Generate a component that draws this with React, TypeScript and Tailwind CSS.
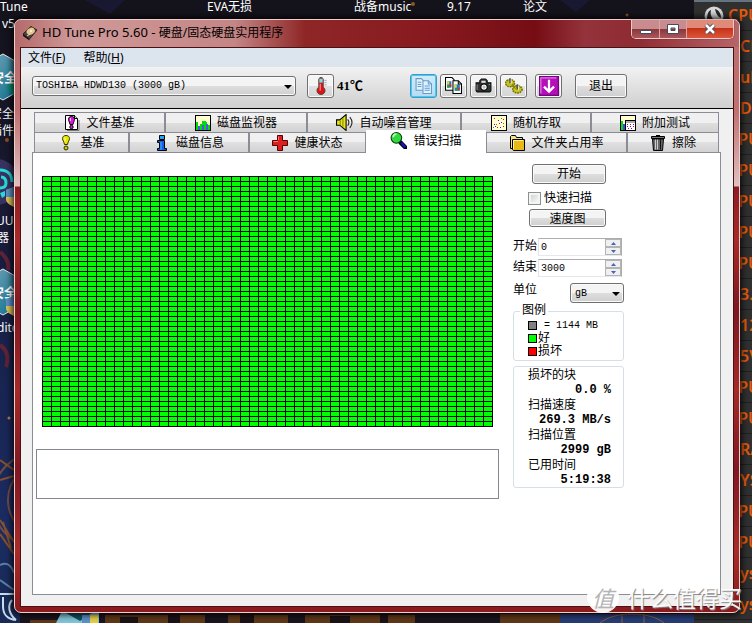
import type { ReactNode } from "react";
import clsx from "clsx";

const mono = "font-['Liberation_Mono','Noto_Sans_CJK_SC',monospace]";
const sans = "font-['Noto_Sans','Noto_Sans_CJK_SC',sans-serif]";

function Icon({ children, size = 16 }: { children: ReactNode; size?: number }) {
  return (
    <svg width={size} height={size} viewBox="0 0 16 16" className="shrink-0" aria-hidden="true">
      {children}
    </svg>
  );
}

/* ---------- Icons ---------- */

const FileBenchIcon = () => (
  <Icon>
    <path d="M1.500.5h9l3 3v11h-12z" fill="#fff" stroke="#000" />
    <path d="M10.500.5v3h3" fill="#ddd" stroke="#000" />
    <path d="M15 5v10.500H3" fill="none" stroke="#777" />
    <path d="M7.500 1.500c2 0 3 1 3 3 0 1.500-1 2.500-1.500 5H6c-.5-2.500-1.500-3.500-1.500-5 0-2 1-3 3-3z" fill="#d41ad4" stroke="#000" />
    <path d="M6.500 3v3" stroke="#ffb4ff" />
    <circle cx="7.500" cy="12" r="1.700" fill="#d41ad4" stroke="#000" />
  </Icon>
);

const MonitorIcon = () => (
  <Icon>
    <g shapeRendering="crispEdges">
      <rect x=".5" y=".5" width="15" height="15" fill="#ffffd2" stroke="#000" />
      <path d="M1 7h2v8H1zM5 9h2v6H5zM9 6h2v9H9zM13 10h2v5h-2z" fill="#00e000" />
      <path d="M3 11h2v4H3zM7 10h2v5H7zM11 9h2v6h-2z" fill="#5050f0" />
      <path d="M7 6h2v4H7zM11 7h1v2h-1z" fill="#00e000" />
    </g>
  </Icon>
);

const SpeakerIcon = () => (
  <Icon size={17}>
    <path d="M.5 5.500h3L9.500.5v15L3.500 10.500h-3z" fill="#e6e619" stroke="#000" />
    <path d="M4 6v4M6.500 4v8" stroke="#878700" />
    <path d="M11 5c1.500 2 1.500 4 0 6M13 3c2.500 3 2.500 7 0 10" fill="none" stroke="#222" />
  </Icon>
);

const RandomIcon = () => (
  <Icon>
    <g shapeRendering="crispEdges">
      <rect x=".5" y=".5" width="15" height="15" fill="#ffffd2" stroke="#000" />
      <path d="M3 3h1v1H3zM8 8h1v1H8zM12 11h1v1h-1zM6 12h1v1H6zM12 4h1v1h-1z" fill="#f00" />
      <path d="M3 9h1v1H3zM7 5h1v1H7zM10 7h1v1h-1zM9 12h1v1H9zM4 11h1v1H4z" fill="#22f" />
      <path d="M2 12h1v1H2zM5 9h1v1H5zM10 3h1v1h-1zM12 8h1v1h-1z" fill="#a60" />
    </g>
  </Icon>
);

const ExtraIcon = () => (
  <Icon>
    <g shapeRendering="crispEdges">
      <rect x=".5" y=".5" width="15" height="15" fill="#ffffd2" stroke="#000" />
      <path d="M1 6h2v9H1z" fill="#00e000" />
      <path d="M3 9h2v6H3z" fill="#44f" />
      <rect x="5.500" y="5.500" width="10" height="10" fill="#fff" stroke="#000" />
      <path d="M6 6h9v2H6z" fill="#aaa" />
      <path d="M7 9h1v1H7zM10 9h1v1h-1zM13 11h1v1h-1zM8 13h1v1H8z" fill="#f00" />
      <path d="M7 11h1v1H7zM10 11h1v1h-1zM13 9h1v1h-1zM11 13h1v1h-1z" fill="#22f" />
    </g>
  </Icon>
);

const BulbIcon = () => (
  <Icon>
    <path d="M8 .5c2.500 0 3.500 1.500 3.500 3 0 2-1.500 3-2 6h-3c-.5-3-2-4-2-6 0-1.500 1-3 3.500-3z" fill="#e6e600" stroke="#333300" />
    <path d="M7 2.500v4" stroke="#ffffc0" />
    <circle cx="8" cy="13" r="2" fill="#d0c800" stroke="#333300" />
  </Icon>
);

const InfoIcon = () => (
  <Icon>
    <path d="M5.500.5h5v4h-5z" fill="#19a5f0" stroke="#000" />
    <path d="M3.500 5.500h7v8h2v2h-9v-2h2v-6h-2z" fill="#1560e6" stroke="#000" />
    <path d="M7 7v8" stroke="#37b4ff" />
  </Icon>
);

const HealthIcon = () => (
  <Icon>
    <path d="M5.500.5h5v5h5v5h-5v5h-5v-5h-5v-5h5z" fill="#dc1e1e" stroke="#500" />
    <path d="M6.500 5V1.500M1.500 6.500H6" stroke="#ff7878" />
  </Icon>
);

const LensIcon = () => (
  <Icon size={17}>
    <path d="M10 10l4.500 4.500" stroke="#000" strokeWidth="4" strokeLinecap="round" />
    <path d="M10.500 10l4 4.500" stroke="#1414c8" strokeWidth="2.200" />
    <circle cx="6" cy="5.500" r="5" fill="#2ddc3c" stroke="#0a3c0a" />
    <path d="M3 5c0-2 1-3 3-3" fill="none" stroke="#c8ffc8" strokeWidth="1.500" />
  </Icon>
);

const FolderIcon = () => (
  <Icon>
    <path d="M1.500 13.500v-12l1-1h4l1 2h6v11z" fill="#f5e187" stroke="#000" />
    <path d="M3.500 4.500h12v11h-11l-1-1z" fill="#e6b919" stroke="#000" />
    <path d="M4.500 14V5.500H14" fill="none" stroke="#fff0a0" />
  </Icon>
);

const TrashIcon = () => (
  <Icon>
    <path d="M6 .5h4M1.500 1.500h13v2h-13z" fill="#777" stroke="#000" />
    <path d="M2.500 4h11l-1 11.500h-9z" fill="#666" stroke="#000" />
    <path d="M5.500 4.500v10M7.500 4.500v10" stroke="#ccc" />
    <path d="M10.500 4.500v10" stroke="#111" />
  </Icon>
);

const ThermoIcon = () => (
  <Icon size={18}>
    <path d="M6 9V2L7 .5h2L10 2v7a3.600 3.600 0 1 1-4 0z" fill="#dc1414" stroke="#444" strokeWidth=".8" />
    <path d="M6.500 1.500h3V5h-3z" fill="#73e1e6" />
    <path d="M7.300 6v6" stroke="#ff9696" />
    <path d="M11 3h2M11 5h2M11 7h2" stroke="#888" strokeWidth=".6" />
  </Icon>
);

const CopyIcon = () => (
  <Icon size={17}>
    <path d="M1 1.500h5l2 2v9H1z" fill="#e1f3ff" stroke="#6e9bb9" />
    <path d="M7.500 3.500h5l3 3v9h-8z" fill="#e1f3ff" stroke="#6e9bb9" />
    <path d="M12.500 3.500v3h3M2.500 5H6M2.500 7H6M2.500 9H6M9 8.500h5M9 10.500h5M9 12.500h5" fill="none" stroke="#5f9be1" />
  </Icon>
);

const CopyImageIcon = () => (
  <Icon size={17}>
    <path d="M.5.5h6l2 2v10h-8z" fill="#fff" stroke="#000" />
    <path d="M2 4h4v6H2z" fill="#2378c8" />
    <path d="M7.500 3.500h5l3 3v9h-8z" fill="#fff" stroke="#000" />
    <path d="M9 7h5v6H9z" fill="#2378c8" />
    <path d="M2 4h2v3H2zM9 7h2v3H9z" fill="#e6dc1e" />
    <path d="M4 7h2v2H4zM12 10h2v2h-2z" fill="#e62828" />
    <path d="M2 8h2v2H2zM10 11h2v2h-2z" fill="#19b419" />
    <path d="M12.500 3.500v3h3" fill="none" stroke="#000" />
  </Icon>
);

const CameraIcon = () => (
  <Icon size={17}>
    <path d="M1 5.500h3.500V3.500L6 2h4l1.500 1.500v2H15V13l-1 1H2l-1-1z" fill="#333" stroke="#111" />
    <path d="M6 3.500h4v2H6z" fill="#ddd" />
    <path d="M2 7v5" stroke="#888" />
    <circle cx="8.500" cy="9.500" r="3" fill="#fff" stroke="#000" />
    <circle cx="8.500" cy="9.500" r="1.500" fill="#bbb" />
    <path d="M13 7h1" stroke="#3e3" />
  </Icon>
);

const GearsIcon = () => (
  <Icon size={18}>
    <g fill="#c8c31e" stroke="#6e6e00" strokeWidth="1.300" strokeDasharray="1.500 .7">
      <ellipse cx="4.500" cy="5.500" rx="4" ry="3.200" />
      <ellipse cx="11" cy="11" rx="4.200" ry="3.200" />
      <path d="M6 7l4 3" stroke="#8c8c00" strokeWidth="3" />
    </g>
    <path d="M4.500 1v4.500M11 6.500v4.500" stroke="#555" strokeWidth="1.500" />
    <path d="M5.500 2v4M12 7.500v4" stroke="#eee" strokeWidth=".8" />
  </Icon>
);

const SaveIcon = () => (
  <Icon size={20}>
    <path d="M.5.5h15v15H.5z" fill="#b40fb9" stroke="#6e0a78" />
    <path d="M1.500 14V1.500H14" fill="none" stroke="#e678e6" />
    <path d="M8 3v9M4 8.500l4 4 4-4" fill="none" stroke="#fff" strokeWidth="1.800" />
  </Icon>
);

const DiskIcon = () => (
  <Icon>
    <path d="M1 9l8-7.500 6 3.500-7.500 9z" fill="#4a4440" stroke="#29211d" />
    <path d="M1 9l6.500 5v1.500L1 11z" fill="#191410" />
    <ellipse cx="8.700" cy="6.300" rx="4.300" ry="3.300" fill="#e6c48c" transform="rotate(-28 8.700 6.300)" />
    <circle cx="9" cy="6" r="1.100" fill="#fff5dc" />
    <path d="M5 11l3-2" stroke="#ddd" />
  </Icon>
);

const Caret = () => (
  <svg width="8" height="4" viewBox="0 0 8 4" className="pointer-events-none absolute top-1/2 right-1 -mt-px" aria-hidden="true">
    <path d="M0 0h8L4 4z" fill="#000" />
  </svg>
);

/* ---------- Desktop behind the window ---------- */

const desktopLabels = [
  { text: "Tune", className: "left-0" },
  { text: "EVA无损", className: "left-[207px]" },
  { text: "战备music", className: "left-[354px]" },
  { text: "9.17", className: "left-[447px]" },
  { text: "论文", className: "left-[523px]" },
];

const sideLabels = [
  { text: "v5", className: "top-[15px] left-0.5" },
  { text: "安全", className: "top-[105px] -left-2.5" },
  { text: "插件", className: "top-[122px] -left-2.5" },
  { text: "UU", className: "top-[212px] -left-1" },
  { text: "器", className: "top-[229px] -left-[3px]" },
  { text: "dito", className: "top-[319px] -left-[3px]" },
];

const sensors = [
  "CPU", "CL", "ul", "DI", "CPU", "CPU", "CPU", "CPU", "CPU", "3.",
  "12", "5V", "CPU", "CPU", "RA", "YS", "CPU", "CPU", "ys", "ys",
];

function Wallpaper() {
  return (
    <svg className="absolute inset-0 h-full w-full" viewBox="0 0 752 623" preserveAspectRatio="none" aria-hidden="true">
      <defs>
        <linearGradient id="night" x1="0" y1="0" x2="0" y2="1">
          <stop offset="0" stopColor="#14121a" />
          <stop offset=".35" stopColor="#191a35" />
          <stop offset=".6" stopColor="#182450" />
          <stop offset=".85" stopColor="#1b2c62" />
          <stop offset="1" stopColor="#182a55" />
        </linearGradient>
        <linearGradient id="shield" x1="0" y1="0" x2="1" y2="1">
          <stop offset="0" stopColor="#78a5b9" />
          <stop offset="1" stopColor="#0a6e8c" />
        </linearGradient>
      </defs>
      <rect width="752" height="623" fill="url(#night)" />
      <path d="M85 0h40l-15 14zM560 0h30l-14 12z" fill="#1e2355" opacity=".4" />
      <circle cx="413" cy="4" r="2" fill="#8c5523" />
      <circle cx="627" cy="15" r="1.500" fill="#8c5523" />
      <circle cx="7" cy="140" r="2" fill="#8c4b28" />
      {[54, 269].map((y) => (
        <g key={y}>
          <path d={`M-12 ${y + 8}L3 ${y}l14 8v30L3 ${y + 46}l-15-8z`} fill="url(#shield)" stroke="#dceaf0" />
          <path d={`M6 ${y + 34}l8-12v20z`} fill="#0f8c73" />
        </g>
      ))}
      <text x="-9" y="82" fontSize="13" fontWeight="700" fill="#fff">安全</text>
      <text x="-9" y="297" fontSize="13" fontWeight="700" fill="#fff">安全</text>
      <circle cx="-4" cy="182" r="23" fill="#37325f" />
      <path d="M0 170c8 0 12 5 12 12M1 177c4 0 5 3 5 6 0 4-3 5-6 5" fill="none" stroke="#28d7d7" strokeWidth="3" />
      <path d="M0 193l5-2v5l-3 2z" fill="#28d7d7" />
      {[187, 296].map((y) => (
        <g key={y}>
          <path d={`M14 ${y}l-8 3v9c0 4 4 6 8 8z`} fill="#dcc35a" />
          <path d={`M14 ${y}l-8 3v7h8z`} fill="#5a91c8" />
        </g>
      ))}
      <path d="M0 252c5 4 10 10 8 18M0 345c6 4 10 12 6 22" fill="none" stroke="#5f2337" strokeWidth="4" />
      <g fill="none" stroke="#734b46" strokeWidth="2">
        <circle cx="46" cy="500" r="38" />
        <circle cx="40" cy="500" r="48" />
        <path d="M0 520l14 22M0 534l14 20M3 522l8 26M0 480l14-4M0 460l14 10" stroke="#86502c" />
      </g>
      <circle cx="9" cy="418" r="1.500" fill="#b4825a" />
      <path d="M0 565c8-4 12 2 14 8M0 580l14 10" stroke="#5a82a5" strokeWidth="2" fill="none" />
      <path d="M0 594h14M3 597v9c0 9 4 13 13 14M12 600c-5 6-3 14 4 20" stroke="#c8dcf0" strokeWidth="2" fill="none" />
      <rect x="20" y="613" width="674" height="10" fill="#19141e" />
      <path d="M30 620h30v3H30zM105 615h100v8H105zM228 615h60v8h-60zM305 615h110v8H305zM500 614h60v9h-60z" fill="#5f3718" />
      <path d="M120 617h18v6h-18zM168 613h12v10h-12zM240 613h14v10h-14zM330 616h20v7h-20zM380 613h8v10h-8z" fill="#1c1216" />
      <path d="M560 614h134v9H560z" fill="#283c73" />
      <path d="M600 623c14-12 50-12 64 0M622 614v9M644 614v9" fill="none" stroke="#876446" />
      <path d="M61 613h38v10H56z" fill="#82c3d7" />
      <path d="M66 613l14 8 12-8z" fill="#14505f" />
      <path d="M82 615h8v8h-8z" fill="#5a91c8" />
      <path d="M90 615h8v8h-8z" fill="#e6cd46" />
    </svg>
  );
}

function SensorGadget() {
  return (
    <div className="absolute inset-y-0 right-0 w-[58px] overflow-hidden border-t-2 border-[#64737d] bg-[#303030]">
      <svg className="absolute top-1 left-2.5" width="20" height="20" viewBox="0 0 20 20" aria-hidden="true">
        <circle cx="10" cy="10" r="9.500" fill="#d7d7d7" />
        <path d="M3 14c0-5 1-9 4-10-1 4 0 6 2 9zM11 3c4 1 6 5 6 9-3-1-5-4-6-9z" fill="#282828" />
      </svg>
      <ul className="-mt-0.5">
        {sensors.map((name, i) => (
          <li
            key={i}
            className={clsx(
              "flex h-[31px] items-center border-b border-[#202020] font-['Noto_Sans',sans-serif] text-base leading-4 font-semibold text-[#e65a0a]",
              name === "CPU" ? "pl-[34px]" : "pl-[46px]"
            )}
          >
            {name}
          </li>
        ))}
      </ul>
    </div>
  );
}

/* ---------- Window parts ---------- */

const buttonFace =
  "border border-[#707070] rounded-[3px] bg-linear-to-b from-[#f4f4f4] from-50% via-[#dedede] via-50% to-[#cfcfcf] shadow-[inset_0_0_0_1px_#fafafa]";

function TitleBar() {
  return (
    <header className="flex h-[27px] items-start rounded-t-md bg-[linear-gradient(to_right,#b46a6a_0,#cf9a99_60px,#c48585_220px,#8f2626_290px,#86191f_420px,#760d15_520px,#94333b_570px,#8f2b32_620px,#b56669_100%)]">
      <div className="flex h-[26px] flex-1 items-center gap-1 pl-[7px]">
        <DiskIcon />
        <h1 className="text-xs whitespace-nowrap text-black">
          <span className="text-[13px]">HD Tune Pro 5.60 - </span>
          硬盘/固态硬盘实用程序
        </h1>
      </div>
      <div className="mr-[5px] flex h-[19px] shrink-0 overflow-hidden rounded-b-[5px] border border-t-0 border-[#f0c8c8] shadow-[0_0_1px_#400]">
        <button aria-label="最小化" className="flex w-7 items-center justify-center border-r border-[#dca5a5] bg-linear-to-b from-[#c98c8e] from-50% via-[#8a353a] via-50% to-[#a8585c]">
          <svg width="12" height="12" viewBox="0 0 12 12"><path d="M.5 7.500h11v3H.5z" fill="#fff" stroke="#444a5a" /></svg>
        </button>
        <button aria-label="最大化" className="flex w-[27px] items-center justify-center border-r border-[#dca5a5] bg-linear-to-b from-[#c98c8e] from-50% via-[#8a353a] via-50% to-[#a8585c]">
          <svg width="12" height="12" viewBox="0 0 12 12"><path d="M.5 1.500h11v9H.5zM4 5h4v2.500H4z" fill="#fff" fillRule="evenodd" stroke="#444a5a" /></svg>
        </button>
        <button aria-label="关闭" className="flex w-[46px] items-center justify-center bg-linear-to-b from-[#e08b7a] from-45% via-[#c62f16] via-45% to-[#d9563a]">
          <svg width="12" height="12" viewBox="0 0 12 12">
            <path d="M2 2l8 8M10 2l-8 8" stroke="#444a5a" strokeWidth="4.500" />
            <path d="M2 2l8 8M10 2l-8 8" stroke="#fff" strokeWidth="2.500" />
          </svg>
        </button>
      </div>
    </header>
  );
}

function MenuBar() {
  return (
    <nav className="flex h-[19px] items-center gap-[18px] bg-[#dce4ee] pl-[7px] text-xs text-black">
      <button>文件(<u>F</u>)</button>
      <button>帮助(<u>H</u>)</button>
    </nav>
  );
}

function ToolButton({ label, active, className, children }: { label: string; active?: boolean; className?: string; children: ReactNode }) {
  return (
    <button
      aria-label={label}
      className={clsx(
        "flex h-6 w-[27px] shrink-0 items-center justify-center rounded-[3px] border",
        active
          ? "border-[#3c9bc8] bg-linear-to-b from-[#d2ebf8] to-[#b4dcf5] shadow-[inset_0_0_0_1px_#46c8f0]"
          : "border-[#707070] bg-linear-to-b from-[#f4f4f4] from-50% via-[#e0e0e0] via-50% to-[#d4d4d4] shadow-[inset_0_0_0_1px_#fafafa]",
        className
      )}
    >
      {children}
    </button>
  );
}

function Toolbar() {
  return (
    <div className="flex h-[42px] items-center border-b border-black bg-linear-to-b from-[#f2f2f2] to-[#cfcfcf] pb-1 pl-[11px]">
      <div className={clsx("relative h-5 w-[264px]", mono)}>
        <select aria-label="磁盘" className={clsx("block h-full w-full appearance-none pl-[3px] text-[10px] text-black", buttonFace)}>
          <option>TOSHIBA HDWD130 (3000 gB)</option>
        </select>
        <Caret />
      </div>
      <ToolButton label="温度" className="ml-[11px]"><ThermoIcon /></ToolButton>
      <output className="ml-[3px] w-[73px] font-['Liberation_Serif','Noto_Sans_CJK_SC',serif] text-[13px] font-bold text-black">41℃</output>
      <div className="flex gap-[3px]">
        <ToolButton label="复制文本" active><CopyIcon /></ToolButton>
        <ToolButton label="复制图像"><CopyImageIcon /></ToolButton>
        <ToolButton label="截图"><CameraIcon /></ToolButton>
        <ToolButton label="选项"><GearsIcon /></ToolButton>
      </div>
      <ToolButton label="保存" className="ml-2"><SaveIcon /></ToolButton>
      <button className={clsx("ml-[13px] h-6 w-[52px] pt-0.5 text-xs text-black", buttonFace, mono)}>退出</button>
    </div>
  );
}

type TabItem = { label: string; icon: ReactNode; active?: boolean };

const upperTabs: TabItem[] = [
  { label: "文件基准", icon: <FileBenchIcon /> },
  { label: "磁盘监视器", icon: <MonitorIcon /> },
  { label: "自动噪音管理", icon: <SpeakerIcon /> },
  { label: "随机存取", icon: <RandomIcon /> },
  { label: "附加测试", icon: <ExtraIcon /> },
];

const lowerTabs: TabItem[] = [
  { label: "基准", icon: <BulbIcon /> },
  { label: "磁盘信息", icon: <InfoIcon /> },
  { label: "健康状态", icon: <HealthIcon /> },
  { label: "错误扫描", icon: <LensIcon />, active: true },
  { label: "文件夹占用率", icon: <FolderIcon /> },
  { label: "擦除", icon: <TrashIcon /> },
];

function Tab({ label, icon, active }: TabItem) {
  return (
    <button
      role="tab"
      aria-selected={!!active}
      className={clsx(
        "flex items-center justify-center gap-1.5 text-xs whitespace-nowrap text-black",
        active
          ? "relative z-10 -mt-0.5 -mb-px bg-white pb-0.5"
          : "h-5 border-t border-r border-l border-[#8c8c96] bg-linear-to-b from-[#f0f0f0] from-50% via-[#e0e0e0] via-50% to-[#d2d2d2]"
      )}
    >
      {icon}
      <span className="pt-[3px] leading-4">{label}</span>
    </button>
  );
}

/* 50 x 50 scanned blocks */
function BlockMap() {
  return (
    <svg width="451" height="251" className="mt-[23px] ml-1.5 block" shapeRendering="crispEdges" role="img" aria-label="错误扫描">
      <defs>
        <pattern id="block" width="9" height="5" patternUnits="userSpaceOnUse">
          <rect width="9" height="5" fill="#000" />
          <rect x="1" y="1" width="8" height="4" fill="#00ff00" />
        </pattern>
      </defs>
      <rect width="451" height="251" fill="url(#block)" />
    </svg>
  );
}

function Spinner({ id, label, value }: { id: string; label: string; value: number }) {
  return (
    <div className="flex h-[18px] items-center">
      <label htmlFor={id} className="w-[25px] text-xs leading-4">{label}</label>
      <div className="flex h-full w-[84px] border border-[#abadb3] border-b-[#e3e9ef] border-l-[#e2e3ea]">
        <input id={id} defaultValue={value} className="w-[66px] bg-white pt-0.5 pl-0.5 text-[10px] outline-none" />
        <div className="flex w-4 flex-col justify-between">
          <button aria-label={`${label} +`} className="flex h-2 items-center justify-center border border-[#b4b4b4] bg-[#f0f0f0]">
            <svg width="5" height="3" viewBox="0 0 5 3"><path d="M0 3h5L2.500 0z" fill="#4664b4" /></svg>
          </button>
          <button aria-label={`${label} -`} className="flex h-2 items-center justify-center border border-[#b4b4b4] bg-[#f0f0f0]">
            <svg width="5" height="3" viewBox="0 0 5 3"><path d="M0 0h5L2.500 3z" fill="#4664b4" /></svg>
          </button>
        </div>
      </div>
    </div>
  );
}

const legend = [
  { text: " = 1144 MB", color: "bg-[#808080]" },
  { text: "好", color: "bg-[#00ff00]" },
  { text: "损坏", color: "bg-[#ff0000]" },
];

const stats = [
  ["损坏的块", "0.0 %"],
  ["扫描速度", "269.3 MB/s"],
  ["扫描位置", "2999 gB"],
  ["已用时间", "5:19:38"],
];

function ScanControls() {
  return (
    <div className="flex w-[111px] shrink-0 flex-col pt-[11px] text-xs text-black">
      <button className={clsx("ml-[19px] h-5 w-[74px] pt-0.5 leading-4", buttonFace)}>开始</button>
      <label className="mt-1.5 ml-[15px] flex h-4 items-center gap-[3px] leading-4">
        <input type="checkbox" className="h-[13px] w-[13px] appearance-none border border-[#8e8f8f] bg-linear-to-br from-[#c8cdd2] to-white shadow-[inset_0_0_0_2px_#f4f4f4]" />
        <span className="pt-0.5">快速扫描</span>
      </label>
      <button className={clsx("mt-[3px] ml-4 h-[18px] w-[77px] pt-0.5 leading-4", buttonFace)}>速度图</button>

      <div className="mt-[11px] flex flex-col gap-[3px]">
        <Spinner id="from" label="开始" value={0} />
        <Spinner id="to" label="结束" value={3000} />
      </div>

      <div className="mt-1.5 flex h-5 justify-between">
        <label htmlFor="unit" className="leading-4">单位</label>
        <div className="relative w-[54px]">
          <select id="unit" className={clsx("block h-full w-full appearance-none pt-0.5 pl-1 text-[10px]", buttonFace)}>
            <option>gB</option>
          </select>
          <Caret />
        </div>
      </div>

      <fieldset className="rounded-[3px] border border-[#d5dfe5] pb-0.5 pl-3.5">
        <legend className="-ml-2 px-0.5 leading-4">图例</legend>
        {legend.map((item) => (
          <div key={item.text} className="flex h-[13px] items-center gap-px">
            <span className={clsx("h-[9px] w-[9px] border border-black", item.color)} />
            <span className={clsx("whitespace-pre", item.text.includes("=") ? "text-[10px]" : "text-xs leading-4")}>{item.text}</span>
          </div>
        ))}
      </fieldset>

      <dl className="mt-[5px] rounded-[3px] border border-[#d5dfe5] pr-3 pl-3.5">
        {stats.map(([name, value]) => (
          <div key={name}>
            <dt className="h-[15px] leading-[18px]">{name}</dt>
            <dd className="h-[15px] text-right leading-4 font-bold whitespace-nowrap">{value}</dd>
          </div>
        ))}
      </dl>
    </div>
  );
}

function Watermark() {
  return (
    <div className="pointer-events-none absolute right-2.5 bottom-2.5 flex items-center gap-2 font-['Noto_Sans_CJK_SC',sans-serif]">
      <span className="flex h-8 w-8 items-center justify-center rounded-full bg-white/95 text-[22px] leading-8 text-[#b4b4b4] italic">值</span>
      <span className="text-[23px] leading-8 text-white/95 [text-shadow:1px_1px_1px_#888]">什么值得买</span>
    </div>
  );
}

export default function App() {
  return (
    <div className={clsx("relative flex min-h-screen flex-col overflow-hidden pt-[19px] pr-3 pb-2.5 pl-3.5", sans)}>
      <Wallpaper />
      {desktopLabels.map((item) => (
        <span key={item.text} className={clsx("absolute -top-0.5 text-xs leading-[18px] whitespace-nowrap text-white", item.className)}>
          {item.text}
        </span>
      ))}
      {sideLabels.map((item) => (
        <span key={item.text} className={clsx("absolute text-xs leading-[18px] whitespace-nowrap text-white", item.className)}>
          {item.text}
        </span>
      ))}
      <SensorGadget />

      <main className="relative flex flex-1 flex-col rounded-[7px] border border-[#f0cdcd] bg-[linear-gradient(to_bottom,#b96e6e_0,#c07070_90px,#e0c0c0_166px,#8c1c22_167px,#a82b28_220px,#7d1720_290px,#a52a28_370px,#801822_450px,#a82c28_530px,#8a1a1c_100%)] shadow-[0_0_6px_2px_rgba(0,0,0,0.8)]">
        <TitleBar />
        <div className="mx-[5px] mb-[5px] flex flex-1 flex-col border border-[#4b0f14] bg-[#f0f0f0]">
          <MenuBar />
          <Toolbar />
          <div className={clsx("flex flex-1 flex-col pt-[3px] pr-3 pb-[11px] pl-[11px]", mono)}>
            <div role="tablist" className="mx-0.5">
              <div className="grid grid-cols-[131fr_142fr_154fr_130fr_128fr]">
                {upperTabs.map((tab) => <Tab key={tab.label} {...tab} />)}
              </div>
              <div className="grid grid-cols-[95fr_120fr_117fr_120fr_141fr_92fr]">
                {lowerTabs.map((tab) => <Tab key={tab.label} {...tab} />)}
              </div>
            </div>
            <section className="flex flex-1 gap-3.5 border border-[#8c8c96] bg-white pl-[3px]">
              <div className="w-[463px] shrink-0">
                <BlockMap />
                <textarea aria-label="日志" readOnly className="mt-[22px] block h-[50px] w-full resize-none border border-[#828790] bg-white" />
              </div>
              <ScanControls />
            </section>
          </div>
        </div>
      </main>
      <Watermark />
    </div>
  );
}
